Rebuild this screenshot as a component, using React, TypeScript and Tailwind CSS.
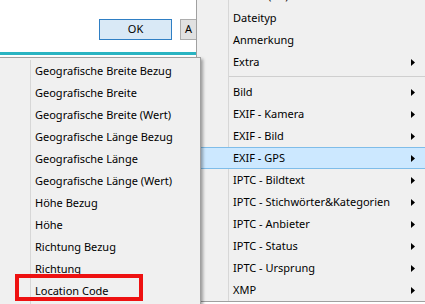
import React from "react";

const font = { fontFamily: '"Noto Sans", "Open Sans", sans-serif' };

function Arrow() {
  return (
    <svg width="4" height="7" viewBox="0 0 4 7" className="block">
      <path d="M0 0 L4 3.5 L0 7 Z" fill="#000" />
    </svg>
  );
}

type Item = { label: string; arrow?: boolean; hl?: boolean; sep?: boolean };

const mainItems: Item[] = [
  { label: "Größe (KB)" },
  { label: "Dateityp" },
  { label: "Anmerkung" },
  { label: "Extra", arrow: true },
  { label: "", sep: true },
  { label: "Bild", arrow: true },
  { label: "EXIF - Kamera", arrow: true },
  { label: "EXIF - Bild", arrow: true },
  { label: "EXIF - GPS", arrow: true, hl: true },
  { label: "IPTC - Bildtext", arrow: true },
  { label: "IPTC - Stichwörter&Kategorien", arrow: true },
  { label: "IPTC - Anbieter", arrow: true },
  { label: "IPTC - Status", arrow: true },
  { label: "IPTC - Ursprung", arrow: true },
  { label: "XMP", arrow: true },
];

const subItems = [
  "Geografische Breite Bezug",
  "Geografische Breite",
  "Geografische Breite (Wert)",
  "Geografische Länge Bezug",
  "Geografische Länge",
  "Geografische Länge (Wert)",
  "Höhe Bezug",
  "Höhe",
  "Richtung Bezug",
  "Richtung",
  "Location Code",
];

export default function App() {
  return (
    <div
      className="relative w-[425px] h-[304px] overflow-hidden bg-white text-[11px] text-black"
      style={font}
    >
      {/* Dialog behind */}
      <div className="w-[197px] h-[52px] flex items-start pt-[19px] pl-[99px] gap-[8px]">
        <div className="w-[73px] h-[21px] shrink-0 border border-[#2f7fc4] bg-[#d9e9f6] flex items-center justify-center">
          OK
        </div>
        <div className="w-[75px] h-[21px] shrink-0 border border-[#adadad] bg-[#e1e1e1] flex items-center pl-[4px]">
          A
        </div>
      </div>
      <div className="w-[197px] h-[3px] bg-[#2ab4c2]" />

      {/* Main context menu */}
      <div className="absolute left-[196px] top-[-16px] w-[245px] border border-[#a0a0a0] bg-[#f0f0f0] pl-[1px]">
        {mainItems.map((it, i) =>
          it.sep ? (
            <div key={i} className="flex h-[8px]">
              <div className="w-[31px] border-r border-[#d7d7d7]" />
              <div className="flex-1 flex items-center">
                <div className="w-full h-px bg-[#cfcfcf] mt-[-1px]" />
              </div>
            </div>
          ) : (
            <div
              key={i}
              className={
                it.hl
                  ? "flex h-[22px] items-center border border-[#7fbde9] bg-[#cce8ff]"
                  : "flex h-[22px] items-center border border-transparent"
              }
            >
              <div
                className={
                  it.hl
                    ? "w-[30px] h-full"
                    : "w-[30px] h-[22px] border-r border-[#d7d7d7]"
                }
              />
              <div className="flex-1 pl-[4px] whitespace-nowrap">{it.label}</div>
              <div className="w-[4px] mr-[24px]">{it.arrow ? <Arrow /> : null}</div>
            </div>
          )
        )}
      </div>

      {/* Submenu */}
      <div className="absolute left-[-1px] top-[57px] w-[202px] h-[260px] border border-[#a0a0a0] bg-[#f0f0f0] shadow-[2px_2px_3px_rgba(0,0,0,0.35)] flex pt-[2px]">
        <div className="w-[31px] shrink-0 border-r border-[#d7d7d7]" />
        <div className="flex-1 flex flex-col">
          {subItems.map((s) => (
            <div key={s} className="h-[22px] flex items-center pl-[4px] whitespace-nowrap">
              {s}
            </div>
          ))}
        </div>
      </div>

      {/* Red highlight box */}
      <div className="absolute left-[15px] top-[274px] w-[128px] h-[27px] border-[4px] border-[#ee1111]" />
    </div>
  );
}
